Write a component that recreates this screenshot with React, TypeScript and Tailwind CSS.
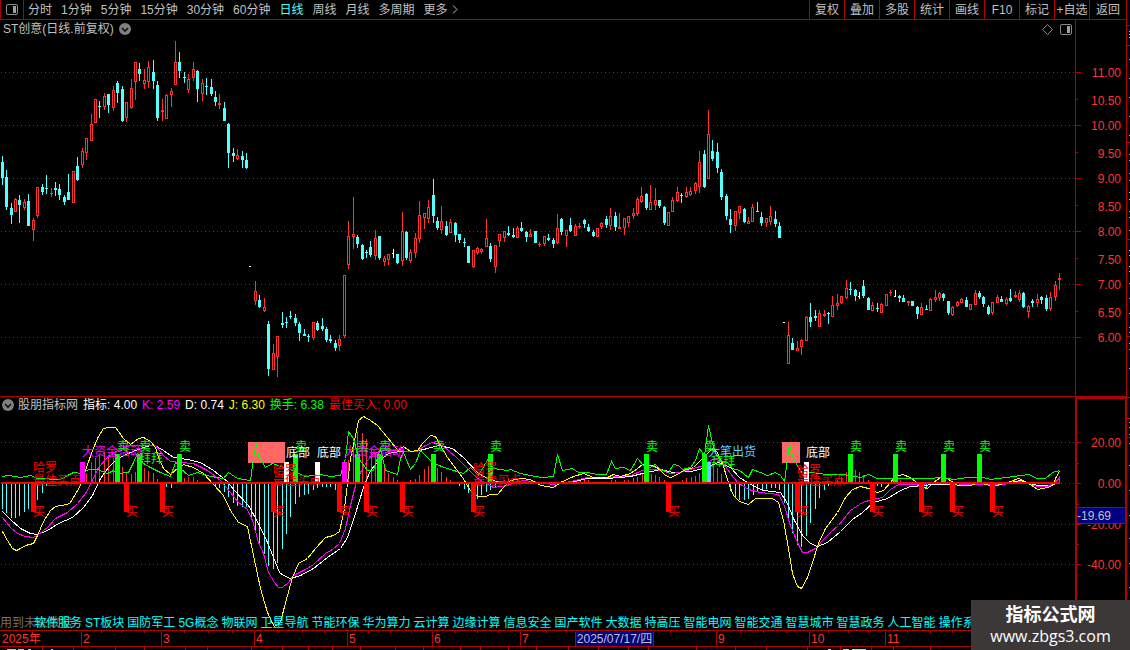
import React from "react";

type Candle = [number, number, number, number, number, "r" | "c" | "w"];
type Point = [number, number];

const UP = "#ff3232";
const DOWN = "#54ffff";

const periods = [
  "分时",
  "1分钟",
  "5分钟",
  "15分钟",
  "30分钟",
  "60分钟",
  "日线",
  "周线",
  "月线",
  "多周期",
];

const tools = ["复权", "叠加", "多股", "统计", "画线", "F10", "标记", "+自选"];

const concepts = [
  "软件服务",
  "ST板块",
  "国防军工",
  "5G概念",
  "物联网",
  "卫星导航",
  "节能环保",
  "华为算力",
  "云计算",
  "边缘计算",
  "信息安全",
  "国产软件",
  "大数据",
  "特高压",
  "智能电网",
  "智能交通",
  "智慧城市",
  "智慧政务",
  "人工智能",
  "操作系统",
];

// x, high, body top, body bottom, low, colour
const candles: Candle[] = [
  [2, 156, 162, 178, 185, "c"], [6, 170, 177, 207, 210, "c"], [11, 203, 208, 215, 224, "c"],
  [15, 198, 199, 212, 212, "r"], [19, 195, 200, 205, 223, "c"], [24, 199, 202, 208, 210, "r"],
  [28, 194, 201, 226, 226, "c"], [33, 218, 220, 230, 241, "r"], [37, 187, 187, 216, 218, "r"],
  [42, 184, 187, 192, 195, "c"], [46, 175, 188, 189, 194, "c"], [51, 188, 193, 194, 197, "r"],
  [55, 182, 188, 190, 196, "c"], [59, 184, 189, 195, 200, "c"], [64, 195, 197, 202, 205, "c"],
  [68, 174, 192, 200, 200, "c"], [73, 171, 171, 203, 203, "r"], [77, 157, 166, 180, 181, "c"],
  [82, 148, 151, 165, 168, "r"], [86, 138, 138, 153, 160, "r"], [91, 114, 124, 141, 141, "r"],
  [95, 99, 99, 123, 123, "r"], [99, 101, 106, 107, 118, "c"], [104, 93, 96, 107, 110, "r"],
  [108, 94, 94, 105, 113, "c"], [113, 86, 90, 108, 111, "r"], [117, 81, 83, 93, 103, "c"],
  [122, 86, 89, 121, 122, "c"], [126, 102, 102, 118, 122, "r"], [131, 79, 88, 108, 109, "r"],
  [135, 62, 62, 82, 100, "r"], [139, 63, 69, 74, 81, "c"], [144, 69, 80, 84, 89, "r"],
  [148, 61, 67, 82, 88, "r"], [153, 60, 72, 81, 89, "c"], [157, 81, 85, 118, 121, "c"],
  [162, 99, 110, 112, 121, "r"], [166, 94, 95, 119, 119, "r"], [171, 88, 91, 95, 107, "r"],
  [175, 41, 62, 85, 85, "r"], [179, 52, 62, 71, 78, "c"], [184, 72, 77, 78, 83, "c"],
  [188, 74, 79, 90, 93, "r"], [193, 62, 69, 78, 81, "r"], [197, 70, 71, 89, 102, "c"],
  [202, 79, 83, 94, 101, "r"], [206, 78, 86, 87, 95, "c"], [211, 79, 87, 94, 96, "c"],
  [215, 91, 97, 102, 106, "c"], [219, 94, 103, 105, 109, "r"], [224, 102, 108, 121, 121, "c"],
  [228, 123, 124, 153, 168, "c"], [233, 148, 153, 156, 162, "c"], [237, 149, 155, 159, 160, "r"],
  [242, 151, 156, 160, 168, "c"], [246, 153, 160, 168, 169, "c"], [250, 266, 266, 267, 267, "w"],
  [255, 281, 291, 301, 305, "r"], [259, 295, 300, 307, 308, "c"], [264, 298, 307, 311, 312, "r"],
  [268, 321, 324, 369, 376, "c"], [273, 344, 353, 370, 370, "r"], [277, 336, 336, 357, 377, "r"],
  [282, 312, 323, 325, 328, "c"], [286, 317, 322, 323, 328, "c"], [290, 311, 316, 317, 319, "c"],
  [295, 314, 318, 323, 326, "c"], [299, 322, 324, 333, 341, "c"], [304, 329, 334, 336, 336, "c"],
  [308, 334, 336, 337, 342, "c"], [313, 322, 322, 338, 340, "r"], [317, 321, 323, 330, 331, "c"],
  [322, 318, 326, 329, 331, "c"], [326, 327, 329, 340, 342, "c"], [330, 335, 339, 341, 343, "c"],
  [335, 340, 343, 348, 351, "c"], [339, 335, 339, 346, 351, "r"], [344, 275, 275, 336, 338, "r"],
  [348, 221, 236, 265, 269, "r"], [353, 197, 234, 237, 249, "r"], [357, 235, 237, 244, 248, "c"],
  [362, 244, 245, 259, 260, "c"], [366, 250, 252, 253, 258, "c"], [370, 241, 247, 255, 257, "c"],
  [375, 230, 238, 256, 260, "r"], [379, 236, 236, 258, 260, "c"], [384, 256, 258, 262, 266, "r"],
  [388, 254, 254, 260, 265, "r"], [393, 249, 253, 254, 258, "w"], [397, 254, 254, 263, 264, "c"],
  [402, 212, 231, 261, 266, "r"], [406, 231, 232, 258, 260, "c"], [410, 249, 252, 261, 263, "r"],
  [415, 233, 238, 253, 258, "r"], [419, 201, 215, 239, 243, "r"], [424, 213, 213, 218, 229, "r"],
  [428, 200, 207, 219, 223, "r"], [433, 179, 195, 216, 223, "c"], [437, 217, 221, 228, 230, "c"],
  [441, 206, 221, 230, 234, "r"], [446, 221, 226, 235, 236, "c"], [450, 219, 222, 233, 233, "r"],
  [455, 222, 223, 235, 242, "c"], [459, 234, 234, 240, 243, "c"], [464, 238, 242, 243, 247, "c"],
  [468, 246, 246, 263, 263, "c"], [473, 250, 250, 267, 268, "r"], [477, 247, 248, 253, 255, "r"],
  [481, 248, 249, 252, 254, "r"], [486, 219, 238, 247, 247, "r"], [490, 243, 246, 259, 262, "c"],
  [495, 245, 245, 267, 273, "r"], [499, 234, 234, 241, 247, "r"], [504, 231, 231, 238, 242, "r"],
  [508, 226, 233, 235, 236, "c"], [513, 228, 235, 237, 238, "c"], [517, 226, 228, 238, 238, "r"],
  [521, 222, 228, 231, 232, "c"], [526, 231, 232, 237, 242, "c"], [530, 229, 234, 237, 237, "r"],
  [535, 231, 231, 243, 243, "c"], [539, 242, 244, 245, 247, "r"], [544, 236, 236, 244, 246, "r"],
  [548, 234, 238, 240, 241, "c"], [553, 238, 240, 244, 248, "c"], [557, 214, 228, 243, 244, "r"],
  [561, 218, 219, 232, 235, "c"], [566, 230, 230, 236, 247, "r"], [570, 218, 225, 231, 232, "c"],
  [575, 224, 226, 236, 236, "r"], [579, 223, 226, 227, 229, "r"], [584, 219, 220, 224, 228, "c"],
  [588, 224, 227, 231, 232, "c"], [593, 230, 232, 236, 237, "c"], [597, 228, 228, 237, 237, "r"],
  [601, 222, 223, 227, 229, "r"], [606, 216, 219, 225, 228, "c"], [610, 208, 216, 226, 230, "r"],
  [615, 212, 216, 227, 231, "c"], [619, 213, 227, 229, 229, "r"], [624, 218, 218, 228, 235, "r"],
  [628, 216, 216, 223, 227, "r"], [633, 208, 213, 216, 219, "r"], [637, 197, 199, 214, 216, "r"],
  [641, 187, 196, 202, 203, "r"], [646, 193, 194, 208, 210, "c"], [650, 185, 202, 210, 210, "r"],
  [655, 188, 200, 205, 210, "r"], [659, 200, 200, 206, 208, "c"], [664, 206, 207, 223, 225, "c"],
  [668, 212, 212, 226, 226, "r"], [672, 197, 200, 212, 212, "r"], [677, 187, 192, 201, 202, "r"],
  [681, 193, 195, 196, 203, "c"], [686, 187, 192, 197, 198, "r"], [690, 187, 191, 195, 196, "r"],
  [695, 182, 183, 191, 194, "r"], [699, 151, 162, 187, 193, "r"], [704, 150, 154, 187, 188, "c"],
  [708, 110, 134, 179, 179, "r"], [712, 140, 151, 159, 161, "c"], [717, 143, 152, 168, 173, "c"],
  [721, 169, 172, 197, 200, "c"], [726, 194, 196, 216, 220, "c"], [730, 209, 219, 225, 233, "c"],
  [735, 211, 211, 226, 231, "r"], [739, 206, 206, 213, 219, "r"], [744, 208, 209, 222, 223, "c"],
  [748, 217, 221, 224, 224, "r"], [752, 204, 207, 222, 222, "r"], [757, 202, 211, 212, 212, "c"],
  [761, 212, 217, 223, 226, "c"], [766, 218, 218, 223, 227, "r"], [770, 206, 216, 222, 225, "r"],
  [775, 211, 219, 224, 227, "c"], [779, 222, 226, 238, 238, "c"], [784, 322, 322, 323, 323, "w"],
  [788, 322, 335, 364, 364, "r"], [792, 338, 343, 350, 350, "c"], [797, 341, 348, 351, 351, "r"],
  [801, 339, 340, 347, 355, "r"], [806, 316, 317, 341, 341, "r"], [810, 303, 317, 322, 327, "c"],
  [815, 310, 316, 318, 321, "c"], [819, 310, 313, 327, 327, "r"], [824, 310, 314, 316, 317, "r"],
  [828, 312, 313, 314, 324, "c"], [832, 296, 305, 317, 317, "r"], [837, 294, 303, 306, 310, "r"],
  [841, 296, 296, 303, 304, "r"], [846, 280, 288, 298, 299, "r"], [850, 282, 289, 290, 295, "c"],
  [855, 289, 290, 296, 301, "c"], [859, 292, 296, 297, 299, "w"], [863, 280, 286, 296, 298, "c"],
  [868, 297, 298, 310, 310, "c"], [872, 302, 305, 311, 311, "r"], [877, 303, 308, 309, 312, "c"],
  [881, 303, 304, 313, 313, "r"], [886, 294, 294, 306, 306, "r"], [890, 290, 292, 293, 296, "r"],
  [895, 290, 296, 297, 297, "w"], [899, 295, 296, 298, 302, "c"], [903, 295, 298, 302, 302, "c"],
  [908, 301, 301, 303, 306, "r"], [912, 301, 301, 306, 306, "c"], [917, 306, 307, 314, 319, "c"],
  [921, 303, 307, 315, 315, "r"], [926, 305, 309, 310, 310, "c"], [930, 298, 299, 311, 311, "r"],
  [935, 290, 297, 300, 302, "r"], [939, 292, 293, 298, 301, "r"], [943, 293, 294, 298, 301, "c"],
  [948, 301, 301, 313, 315, "c"], [952, 306, 307, 315, 316, "r"], [957, 301, 302, 306, 307, "r"],
  [961, 298, 299, 303, 303, "r"], [966, 297, 300, 307, 307, "c"], [970, 304, 304, 310, 310, "r"],
  [975, 290, 293, 305, 305, "r"], [979, 291, 293, 297, 299, "c"], [983, 296, 297, 304, 307, "c"],
  [988, 305, 307, 314, 315, "c"], [992, 302, 302, 313, 315, "r"], [997, 295, 297, 303, 303, "r"],
  [1001, 296, 299, 302, 302, "c"], [1006, 297, 299, 304, 305, "r"], [1010, 289, 298, 301, 302, "c"],
  [1015, 291, 295, 297, 298, "r"], [1019, 290, 293, 300, 302, "r"], [1023, 292, 293, 307, 308, "c"],
  [1028, 305, 306, 312, 318, "r"], [1032, 299, 301, 303, 307, "c"], [1037, 294, 299, 303, 307, "r"],
  [1041, 296, 297, 300, 304, "c"], [1046, 295, 298, 309, 311, "c"], [1050, 292, 297, 309, 311, "r"],
  [1055, 281, 285, 297, 301, "r"], [1059, 273, 278, 280, 290, "r"],
];

const priceLabels: [string, number][] = [
  ["11.00", 72], ["10.50", 100], ["10.00", 125], ["9.50", 153], ["9.00", 178], ["8.50", 206],
  ["8.00", 231], ["7.50", 259], ["7.00", 284], ["6.50", 312], ["6.00", 337],
];
const priceGrid = [72, 125, 178, 231, 284, 337];
const priceHalf = [99, 152, 205, 258, 311];

const jLine: Point[] = [
  [2, 531], [7, 540], [12, 548], [16, 550], [20, 548], [25, 545], [33, 543], [37, 535], [43, 521],
  [50, 510], [55, 506], [67, 504], [70, 502], [80, 485], [85, 470], [92, 450], [97, 438], [103, 428],
  [108, 427], [115, 427], [118, 431], [123, 438], [130, 444], [138, 438], [143, 437], [150, 441],
  [155, 447], [158, 457], [163, 468], [170, 474], [178, 467], [183, 464], [193, 467], [203, 473],
  [213, 484], [223, 495], [230, 510], [238, 522], [247, 526], [253, 555], [260, 588], [267, 612],
  [272, 623], [274, 626], [280, 622], [283, 610], [287, 595], [292, 577], [298, 563], [307, 558],
  [315, 548], [325, 537], [333, 535], [339, 531], [344, 508], [347, 483], [350, 458], [355, 435],
  [358, 420], [363, 416], [370, 420], [377, 425], [387, 437], [395, 447], [398, 450], [403, 446],
  [410, 451], [417, 450], [422, 443], [430, 435], [435, 436], [440, 445], [447, 457], [453, 465],
  [462, 477], [470, 490], [477, 496], [485, 496], [490, 494], [497, 494], [503, 487], [510, 480],
  [520, 478], [530, 479], [540, 485], [553, 487], [560, 482], [573, 476], [583, 473], [593, 477],
  [607, 477], [613, 474], [620, 476], [630, 473], [637, 468], [642, 464], [652, 465], [658, 468],
  [665, 475], [670, 477], [677, 474], [683, 470], [693, 467], [698, 462], [703, 457], [708, 452],
  [712, 448], [717, 452], [722, 463], [728, 482], [733, 495], [739, 501], [748, 504], [755, 498],
  [772, 498], [778, 502], [783, 520], [788, 548], [792, 573], [797, 586], [801, 588], [807, 577],
  [812, 562], [818, 543], [825, 528], [837, 512], [845, 497], [852, 489], [860, 486], [868, 488],
  [877, 492], [883, 490], [890, 482], [895, 476], [902, 474], [910, 477], [915, 481], [923, 487],
  [927, 488], [933, 482], [940, 477], [947, 478], [957, 485], [970, 485], [978, 482], [993, 486],
  [1010, 481], [1018, 478], [1027, 482], [1037, 489], [1047, 487], [1052, 485], [1055, 478], [1059, 471],
];

const kLine: Point[] = [
  [2, 517], [10, 527], [17, 533], [25, 536], [33, 537], [38, 534], [47, 527], [55, 518], [67, 512],
  [77, 503], [85, 493], [92, 480], [98, 467], [107, 457], [117, 450], [130, 445], [147, 445],
  [155, 445], [163, 455], [170, 461], [180, 462], [193, 463], [207, 470], [220, 480], [230, 492],
  [238, 502], [247, 509], [252, 520], [258, 542], [263, 553], [268, 572], [274, 582], [278, 587],
  [282, 587], [288, 582], [293, 575], [305, 569], [313, 564], [325, 553], [332, 549], [339, 543],
  [345, 528], [350, 505], [355, 485], [360, 472], [367, 460], [373, 453], [383, 450], [397, 450],
  [410, 451], [417, 451], [423, 446], [432, 442], [440, 444], [448, 450], [457, 458], [467, 468],
  [477, 478], [493, 487], [507, 485], [513, 482], [523, 480], [540, 482], [553, 484], [570, 481],
  [587, 477], [607, 477], [630, 475], [642, 470], [653, 469], [662, 470], [670, 473], [680, 472],
  [693, 468], [703, 465], [710, 460], [715, 458], [722, 462], [730, 473], [737, 482], [748, 489],
  [760, 492], [778, 494], [783, 503], [790, 525], [797, 542], [802, 552], [807, 552], [815, 548],
  [822, 540], [830, 532], [838, 525], [850, 510], [862, 502], [872, 499], [882, 497], [890, 489],
  [898, 484], [917, 484], [933, 483], [950, 483], [967, 484], [1003, 484], [1020, 481], [1037, 486],
  [1047, 486], [1055, 482], [1059, 477],
];

const dLine: Point[] = [
  [2, 511], [10, 519], [20, 528], [30, 533], [37, 534], [47, 530], [58, 523], [72, 517], [83, 507],
  [92, 495], [100, 478], [108, 467], [117, 458], [130, 452], [143, 447], [153, 444], [163, 450],
  [173, 457], [187, 459], [200, 462], [213, 470], [227, 481], [233, 489], [248, 505], [258, 523],
  [267, 542], [273, 557], [279, 572], [283, 575], [290, 578], [300, 575], [313, 568], [327, 557],
  [340, 548], [347, 537], [355, 513], [363, 487], [370, 470], [377, 462], [388, 453], [400, 451],
  [415, 451], [427, 448], [438, 445], [452, 448], [463, 457], [477, 472], [490, 480], [507, 482],
  [540, 482], [570, 482], [587, 478], [607, 478], [630, 476], [642, 473], [660, 469], [673, 472],
  [690, 471], [703, 468], [718, 462], [730, 467], [739, 477], [752, 485], [763, 490], [780, 492],
  [787, 503], [793, 518], [802, 535], [810, 543], [817, 546], [827, 542], [840, 531], [852, 519],
  [862, 512], [873, 502], [887, 498], [900, 490], [910, 486], [923, 485], [933, 484], [1010, 482],
  [1020, 480], [1037, 485], [1050, 485], [1059, 482],
];

const turnoverLine: Point[] = [
  [2, 476], [8, 475], [20, 477], [30, 475], [37, 478], [60, 479], [67, 475], [73, 472], [82, 473],
  [88, 469], [97, 469], [107, 473], [113, 470], [118, 473], [128, 472], [133, 462], [137, 453],
  [143, 463], [150, 467], [160, 472], [170, 476], [175, 462], [180, 468], [188, 475], [197, 472],
  [210, 476], [223, 478], [228, 472], [237, 478], [250, 480], [253, 457], [256, 443], [258, 455],
  [265, 467], [272, 463], [283, 467], [292, 470], [305, 476], [320, 474], [330, 476], [340, 475],
  [345, 458], [348, 431], [353, 438], [358, 458], [367, 470], [373, 470], [377, 457], [380, 448],
  [385, 470], [397, 474], [400, 458], [403, 452], [410, 469], [415, 463], [420, 450], [425, 455],
  [433, 463], [447, 468], [463, 473], [470, 467], [478, 475], [485, 463], [488, 458], [493, 468],
  [507, 470], [510, 469], [520, 473], [535, 476], [542, 477], [553, 476], [557, 454], [562, 470],
  [572, 468], [578, 472], [587, 472], [597, 474], [606, 474], [611, 461], [615, 468], [623, 467],
  [630, 470], [637, 458], [643, 465], [650, 467], [655, 464], [660, 469], [668, 472], [673, 464],
  [678, 465], [682, 469], [690, 467], [695, 460], [699, 448], [704, 455], [708, 425], [712, 443],
  [715, 453], [720, 460], [727, 462], [732, 468], [739, 470], [748, 477], [752, 469], [760, 472],
  [767, 475], [775, 472], [780, 475], [784, 481], [787, 458], [789, 443], [793, 458], [798, 467],
  [803, 475], [810, 472], [827, 474], [843, 474], [860, 477], [868, 474], [877, 478], [893, 478],
  [927, 478], [943, 477], [953, 479], [967, 477], [983, 477], [990, 479], [1013, 476], [1028, 474],
  [1037, 478], [1045, 478], [1052, 472], [1059, 470],
];

// bars below the zero line
const fallBars: Point[] = [
  [2, 509], [6, 513], [11, 518], [15, 518], [19, 516], [24, 512], [28, 509], [33, 502], [37, 500],
  [42, 493], [46, 486], [166, 487], [171, 488], [215, 487], [219, 488], [224, 492], [228, 497],
  [233, 503], [237, 506], [242, 507], [246, 507], [251, 517], [255, 531], [259, 545], [264, 554],
  [268, 566], [273, 569], [277, 563], [282, 549], [286, 534], [290, 517], [295, 504], [299, 497],
  [304, 495], [308, 494], [313, 490], [317, 488], [322, 487], [326, 487], [330, 487], [335, 490],
  [459, 486], [464, 489], [468, 493], [477, 499], [481, 495], [486, 492], [490, 490], [495, 488],
  [730, 491], [735, 498], [739, 500], [744, 500], [748, 499], [753, 495], [757, 492], [762, 490],
  [766, 489], [771, 488], [775, 488], [779, 490], [784, 503], [788, 520], [792, 533], [797, 545],
  [801, 547], [806, 536], [810, 523], [815, 509], [819, 498], [824, 490], [828, 486], [877, 486],
  [881, 487], [917, 487], [922, 488], [926, 488],
];

// bars above the zero line
const riseBars: Point[] = [
  [86, 473], [91, 462], [95, 458], [99, 455], [104, 452], [108, 455], [113, 458], [122, 467],
  [126, 472], [131, 474], [135, 472], [144, 468], [148, 471], [153, 473], [157, 479], [184, 478],
  [188, 477], [193, 477], [197, 480], [348, 460], [353, 443], [357, 432], [362, 433], [366, 439],
  [371, 448], [375, 452], [384, 468], [388, 473], [393, 477], [397, 480], [410, 480], [415, 479],
  [419, 475], [424, 469], [428, 466], [437, 468], [441, 472], [446, 477], [450, 480], [504, 480],
  [508, 478], [513, 478], [517, 480], [580, 480], [584, 480], [588, 480], [611, 480], [615, 480],
  [624, 480], [628, 480], [633, 478], [637, 477], [642, 474], [651, 474], [655, 475], [659, 477],
  [664, 480], [682, 480], [686, 478], [691, 477], [695, 476], [699, 473], [713, 465], [717, 468],
  [721, 474], [837, 480], [841, 477], [846, 472], [855, 470], [859, 472], [863, 475], [868, 480],
  [900, 480], [1055, 479], [1059, 476],
];

const sellBars = [115, 137, 177, 293, 355, 377, 431, 488, 644, 702, 848, 893, 941, 977];
const buyBars = [31, 124, 160, 271, 337, 364, 400, 471, 666, 795, 870, 919, 950, 990];

const shortBars: [number, string][] = [
  [80, "#ff00ff"], [342, "#ff00ff"], [284, "#ffffff"], [315, "#ffffff"], [804, "#ffffff"],
  [706, "#66ccff"],
];

const notes: [string, number, number, string][] = [
  ["大资金活动", 82, 456, "#ff00ff"],
  ["大资金活动", 344, 456, "#ff00ff"],
  ["底部", 286, 457, "#ffffff"],
  ["底部", 317, 457, "#ffffff"],
  ["底部", 806, 457, "#ffffff"],
  ["大笔出货", 708, 456, "#66ccff"],
  ["拜拜", 139, 463, "#00ff00"],
  ["拜拜", 711, 466, "#00ff00"],
  ["哈罗", 33, 472, "#ff0000"],
  ["哈罗", 273, 475, "#ff0000"],
  ["哈罗", 473, 473, "#ff0000"],
  ["哈罗", 797, 475, "#ff0000"],
  ["最佳买点", 33, 485, "#ff0000"],
  ["最佳买点", 273, 485, "#ff0000"],
  ["最佳买点", 473, 485, "#ff0000"],
  ["最佳买点", 797, 485, "#ff0000"],
];

const readings: [string, string, string][] = [
  ["指标", "4.00", "text-white"],
  ["K", "2.59", "text-[#ff00ff]"],
  ["D", "0.74", "text-white"],
  ["J", "6.30", "text-[#ffff00]"],
  ["换手", "6.38", "text-[#00ff00]"],
  ["最佳买入", "0.00", "text-[#ff0000]"],
];

const minorTicks = [
  101, 121, 144, 184, 208, 232, 278, 302, 324, 368, 390, 411, 454, 477, 498, 546, 566, 670, 694,
  740, 763, 786, 828, 848, 868, 907, 930, 952,
];
const lowerTicks = [
  42, 73, 115, 144, 185, 207, 251, 282, 308, 332, 360, 395, 423, 460, 480, 508, 536, 568, 598,
  628, 648, 696, 735, 766, 807, 840, 871, 893, 930,
];

const toPoints = (line: Point[]) =>
  line.map(([x, y]) => `${x + 0.5},${y + 0.5}`).join(" ");

const GridLine = ({ y, from = 1 }: { y: number; from?: number }) => (
  <line
    x1={from}
    x2="100%"
    y1={y + 0.5}
    y2={y + 0.5}
    stroke="#b01414"
    strokeDasharray="1 3"
  />
);

const CandleMark = ({ data }: { data: Candle }) => {
  const [x, high, top, bottom, low, kind] = data;
  const color = kind === "r" ? UP : kind === "c" ? DOWN : "#ffffff";
  const height = bottom - top;
  const hollow = kind === "r" && height > 2;

  return (
    <g>
      <rect x={x} y={high} width={1} height={low - high} fill={color} />
      {hollow ? (
        <rect
          x={x - 0.5}
          y={top + 0.5}
          width={2}
          height={height - 1}
          fill="#000000"
          stroke={color}
        />
      ) : (
        <rect x={x - 1} y={top} width={kind === "w" ? 2 : 3} height={height} fill={color} />
      )}
    </g>
  );
};

const CollapseIcon = () => (
  <svg width="12" height="12" viewBox="0 0 12 12">
    <circle cx="6" cy="6" r="6" fill="#808080" />
    <path d="M3 5l3 3 3-3" fill="none" stroke="#101010" strokeWidth="1.6" />
  </svg>
);

const PanelIcon = () => (
  <svg width="12" height="11" viewBox="0 0 12 11">
    <rect x="0.5" y="0.5" width="11" height="10" rx="1.5" fill="none" stroke="#8a8a8a" />
    <rect x="7" y="2" width="3" height="7" fill="#a0a0a0" />
  </svg>
);

const TopBar = () => (
  <header className="flex h-5 shrink-0 justify-between border-b border-[#b00000] text-[#c0c0c0]">
    <div className="flex min-w-0 overflow-hidden">
      <button
        aria-label="侧栏"
        className="flex w-6 shrink-0 items-center justify-center border-x border-[#b00000]"
      >
        <PanelIcon />
      </button>
      <nav className="flex items-center gap-[9px] pl-1 whitespace-nowrap">
        {periods.map((name) => (
          <button key={name} className={name === "日线" ? "text-[#54ffff]" : ""}>
            {name}
          </button>
        ))}
        <button className="flex items-center gap-1">
          更多
          <svg width="6" height="9" viewBox="0 0 6 9">
            <path d="M1 0.5l4 4-4 4" fill="none" stroke="#c0c0c0" />
          </svg>
        </button>
      </nav>
    </div>
    <div className="flex shrink-0 whitespace-nowrap">
      {tools.map((name) => (
        <button key={name} className="w-[35px] border-l border-[#b00000] text-center">
          {name}
        </button>
      ))}
      <button className="w-[37px] border-l border-[#b00000] text-center">返回</button>
    </div>
  </header>
);

const PricePane = () => (
  <section className="flex min-h-0 flex-1">
    <div className="relative min-w-0 flex-1">
      <svg className="block h-full w-full" shapeRendering="crispEdges">
        <g transform="translate(0 -20)">
          {priceGrid.map((y) => (
            <GridLine key={y} y={y} />
          ))}
          {candles.map((c) => (
            <CandleMark key={c[0]} data={c} />
          ))}
        </g>
      </svg>
      <div className="absolute inset-x-0 top-0 flex h-[18px] items-center justify-between pr-[3px] pl-[3px] text-[#c0c0c0]">
        <h1 className="flex items-center gap-[5px]">
          ST创意(日线.前复权)
          <CollapseIcon />
        </h1>
        <div className="flex items-center gap-[7px]">
          <svg width="11" height="11" viewBox="0 0 11 11">
            <path d="M5.5 0.5l5 5-5 5-5-5z" fill="none" stroke="#8a8a8a" />
          </svg>
          <PanelIcon />
        </div>
      </div>
    </div>
    <svg className="block h-full w-[51px] border-l border-[#b00000]" shapeRendering="crispEdges">
      <g transform="translate(0 -20)">
        {priceGrid.map((y) => (
          <rect key={y} x={0} y={y} width={5} height={1} fill="#b00000" />
        ))}
        {priceHalf.map((y) => (
          <rect key={y} x={0} y={y} width={2} height={1} fill="#b00000" />
        ))}
        {priceLabels.map(([label, y]) => (
          <text key={label} x={45} y={y + 5} textAnchor="end" fill={UP}>
            {label}
          </text>
        ))}
      </g>
    </svg>
  </section>
);

const IndicatorPane = () => (
  <section className="flex h-[234px] shrink-0 border-t border-[#b00000]">
    <div className="relative min-w-0 flex-1 overflow-hidden">
      <svg className="block h-full w-full" shapeRendering="crispEdges">
        <g transform="translate(0 -397)">
          <GridLine y={442} />
          <GridLine y={524} />
          <GridLine y={564} />
          <GridLine y={483} from={1061} />

          <rect x={248} y={442} width={37} height={21} fill="#ff6666" />
          <rect x={782} y={442} width={18} height={21} fill="#ff6666" />

          {fallBars.map(([x, y]) => (
            <rect key={x} x={x} y={484} width={1} height={y - 484} fill={DOWN} />
          ))}
          {riseBars.map(([x, y]) => (
            <rect key={x} x={x} y={y} width={1} height={482 - y} fill={UP} />
          ))}

          <g fill="none">
            <polyline points={toPoints(dLine)} stroke="#ffffff" />
            <polyline points={toPoints(kLine)} stroke="#ff00ff" />
            <polyline points={toPoints(jLine)} stroke="#ffff00" />
            <polyline points={toPoints(turnoverLine)} stroke="#00ff00" />
          </g>

          {shortBars.map(([x, fill]) => (
            <rect key={x} x={x} y={462} width={5} height={20} fill={fill} />
          ))}
          {sellBars.map((x) => (
            <g key={x} fill="#00ff00">
              <rect x={x} y={454} width={5} height={28} />
              <text x={x + 2} y={451}>
                卖
              </text>
            </g>
          ))}
          {buyBars.map((x) => (
            <g key={x} fill="#ff0000">
              <rect x={x} y={484} width={5} height={28} />
              <text x={x + 2} y={516}>
                买
              </text>
            </g>
          ))}
          {notes.map(([text, x, y, fill]) => (
            <text key={`${text}${x}`} x={x} y={y} fill={fill}>
              {text}
            </text>
          ))}
          <rect x={1} y={482} width={1059} height={2} fill="#ff0000" />
        </g>
      </svg>

      <div className="absolute inset-x-0 top-0 flex h-4 items-center gap-[5px] pl-[2px] whitespace-nowrap">
        <h2 className="flex items-center gap-1 text-[#c0c0c0]">
          <CollapseIcon />
          股朋指标网
        </h2>
        {readings.map(([name, value, color]) => (
          <span key={name} className={color}>
            {name}: {value}
          </span>
        ))}
      </div>

      <div className="absolute inset-x-0 bottom-0 grid h-[15px] items-center whitespace-nowrap">
        <span className="col-start-1 row-start-1 text-[#707070]">用到未来数据</span>
        <nav className="col-start-1 row-start-1 flex gap-[3px] pl-[34px] text-[#00ffff]">
          {concepts.map((name) => (
            <a key={name} href="#">
              {name}
            </a>
          ))}
        </nav>
      </div>
    </div>

    <div className="relative w-[51px] border-t-2 border-r border-l-2 border-[#b00000]">
      <svg className="block h-full w-full" shapeRendering="crispEdges">
        <g transform="translate(0 -399)">
          {[442, 483, 524, 564].map((y) => (
            <rect key={y} x={0} y={y} width={4} height={1} fill="#b00000" />
          ))}
          {[463, 504, 544].map((y) => (
            <rect key={y} x={0} y={y} width={2} height={1} fill="#b00000" />
          ))}
          <g fill={UP} textAnchor="end">
            <text x={44} y={447}>20.00</text>
            <text x={44} y={488}>0.00</text>
            <text x={44} y={529}>-20.00</text>
            <text x={44} y={569}>-40.00</text>
          </g>
        </g>
      </svg>
      <span className="absolute inset-x-0 top-[108px] flex h-[17px] items-center border-y border-[#b00000] bg-[#000080] text-[#c0c0c0]">
        -19.69
      </span>
    </div>
  </section>
);

const DateAxis = () => (
  <footer className="shrink-0">
    <div className="relative flex h-4 items-center border-t border-[#b00000] whitespace-nowrap text-[#ff3232]">
      <span className="w-[81px] pl-[2px]">2025年</span>
      <span className="w-20 border-l border-[#b00000] pl-px">2</span>
      <span className="w-[93px] border-l border-[#b00000] pl-px">3</span>
      <span className="w-[93px] border-l border-[#b00000] pl-px">4</span>
      <span className="w-[85px] border-l border-[#b00000] pl-px">5</span>
      <span className="w-[88px] border-l border-[#b00000] pl-px">6</span>
      <span className="w-[55px] border-l border-[#b00000] pl-px">7</span>
      <time
        dateTime="2025-07-17"
        className="w-[79px] border-x border-[#b00000] bg-[#000080] text-center text-[#c0c0c0]"
      >
        2025/07/17/四
      </time>
      <span className="ml-[62px] w-[93px] border-l border-[#b00000] pl-px">9</span>
      <span className="w-[76px] border-l border-[#b00000] pl-px">10</span>
      <span className="border-l border-[#b00000] pl-px">11</span>
      <svg className="absolute inset-0 h-full w-full" shapeRendering="crispEdges">
        {minorTicks.map((x) => (
          <rect key={x} x={x} y={0} width={1} height={2} fill="#b00000" />
        ))}
      </svg>
    </div>
    <svg
      className="block h-1 w-full border-t border-[#b00000]"
      shapeRendering="crispEdges"
    >
      {lowerTicks.map((x) => (
        <rect key={x} x={x} y={0} width={1} height={3} fill="#b00000" />
      ))}
      <path d="M7 2.5h9m2 0h6m4 0h3m20 0h2" stroke="#c0c0c0" />
      <path d="M828 2.5h3m12 0h6m3 0h14" stroke="#54ffff" />
    </svg>
  </footer>
);

const SideStrip = () => (
  <svg className="block h-full w-[3px] shrink-0" shapeRendering="crispEdges">
    {[25, 45, 142, 239, 336, 397, 418, 437].map((y) => (
      <rect key={y} x={0} y={y} width={3} height={1} fill="#b00000" />
    ))}
    {[
      31, 34, 37, 59, 78, 97, 116, 135, 154, 160, 173, 180, 192, 199, 211, 217, 230, 250, 255, 266,
      271, 283, 298, 313, 327, 332, 343, 349, 368, 422, 427, 434, 443, 465, 490, 515, 538, 563, 587,
    ].map((y) => (
      <rect key={y} x={2} y={y} width={1} height={1} fill="#c0c0c0" />
    ))}
  </svg>
);

const App: React.FC = () => {
  return (
    <div className="relative flex h-screen overflow-hidden bg-black font-['Liberation_Sans','Noto_Sans_CJK_SC',sans-serif] text-[12px] leading-[14px]">
      <main className="flex min-w-0 flex-1 flex-col border-r border-[#b00000]">
        <TopBar />
        <PricePane />
        <IndicatorPane />
        <DateAxis />
      </main>
      <SideStrip />

      {/* Site badge */}
      <div className="absolute right-0 bottom-0 flex h-[50px] w-[159px] flex-col items-center justify-center bg-[#3d3838] text-white">
        <strong className="text-[18px] leading-[22px]">指标公式网</strong>
        <span className="font-['Open_Sans',sans-serif] text-[16px] leading-5">www.zbgs3.com</span>
      </div>
    </div>
  );
};

export default App;
